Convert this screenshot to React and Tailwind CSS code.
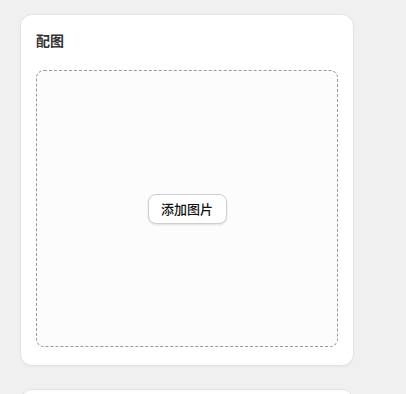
export default function App() {
  return (
    <div
      className="min-h-[394px] w-full bg-[#f0f0f0] pt-[14px] pl-[20px] overflow-hidden"
      style={{ fontFamily: '"Noto Sans CJK SC", "Noto Sans", sans-serif' }}
    >
      <div className="w-[334px] rounded-[12px] border border-[#e3e3e3] bg-white px-[15px] pt-[15px] pb-[18px] shadow-[0_1px_2px_rgba(0,0,0,0.04)]">
        <h2 className="text-[14px] leading-[20px] font-semibold text-[#333]">配图</h2>
        <div className="mt-[20px] flex h-[277px] w-[302px] items-center justify-center rounded-[8px] border border-dashed border-[#999] bg-[#fcfcfc]">
          <button className="h-[30px] w-[79px] rounded-[8px] border border-[#cfcfcf] bg-white text-[13px] font-medium text-[#111] shadow-[0_1px_2px_rgba(0,0,0,0.12)]">
            添加图片
          </button>
        </div>
      </div>
      <div className="mt-[23px] h-[40px] w-[334px] rounded-[12px] border border-[#e3e3e3] bg-white" />
    </div>
  );
}
